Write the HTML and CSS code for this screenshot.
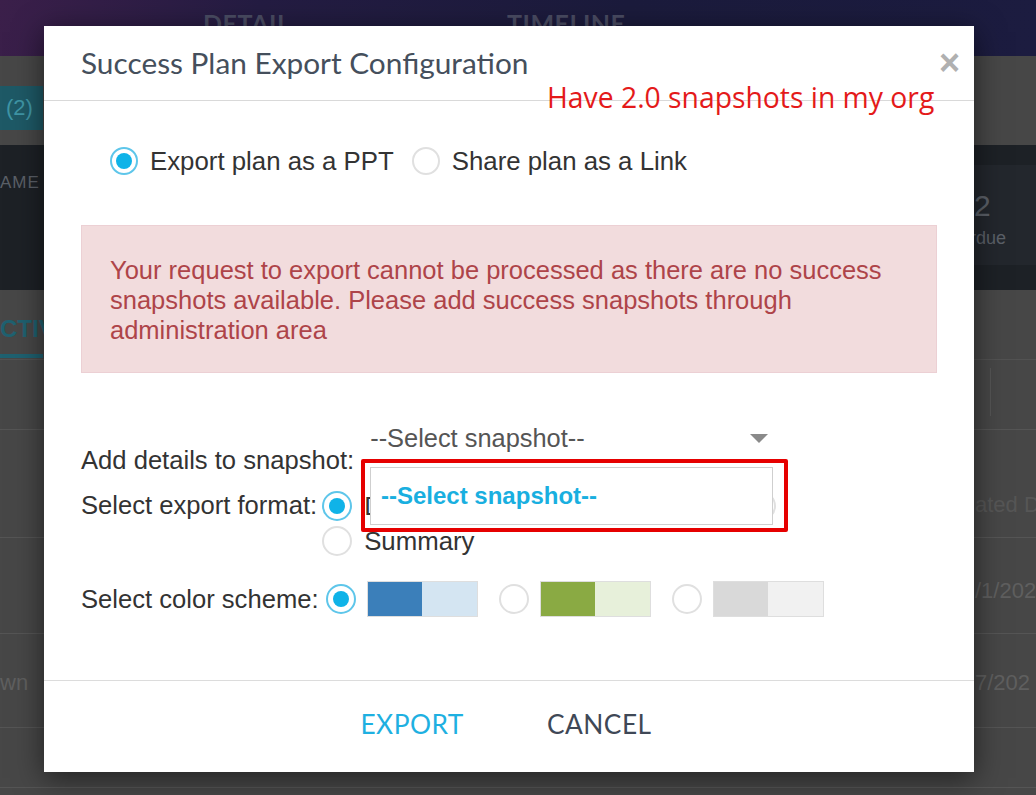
FILE: index.html
```html
<!DOCTYPE html>
<html>
<head>
<meta charset="utf-8">
<link rel="stylesheet" href="styles.css">
</head>
<body>
<div class="page">
  <div class="nav">
    <span class="navtab t1">DETAIL</span>
    <span class="navtab t2">TIMELINE</span>
  </div>
  <div class="subbar"><span class="tealtab">(2)</span></div>
  <div class="band">
    <span class="band-left">AME</span>
    <div class="band-box"><span class="big">2</span><span class="small">rdue</span></div>
  </div>
  <div class="tabs2"><span class="activ">CTIV</span></div>
  <div class="bgrow r1"><span class="vsep"></span></div>
  <div class="bgrow r2"><span class="rtext">ated D</span></div>
  <div class="bgrow r3"><span class="rtext">/1/202</span></div>
  <div class="bgrow r4"><span class="ltext">wn</span><span class="rtext">7/202</span></div>
  <div class="bgrow r5"></div>

  <div class="modal">
    <div class="modal-header">
      <span class="title">Success Plan Export Configuration</span>
      <span class="close">×</span>
    </div>
    <div class="modal-body">
      <div class="mode-row">
        <span class="radio checked"></span><span class="opt">Export plan as a PPT</span>
        <span class="radio"></span><span class="opt">Share plan as a Link</span>
      </div>
      <div class="alert">Your request to export cannot be processed as there are no success snapshots available. Please add success snapshots through administration area</div>
      <div class="form">
        <div class="frow snap-row">
          <span class="flabel snap-label">Add details to snapshot:</span>
          <div class="select">
            <span class="select-text">--Select snapshot--</span>
            <span class="caret"></span>
          </div>
        </div>
        <div class="frow fmt-row">
          <span class="flabel">Select export format:</span>
          <div class="fmt-opts">
            <div class="fmt-line">
              <span class="radio checked sm"></span><span class="opt fmt-text">Detailed</span>
              <span class="radio sm"></span>
            </div>
            <div class="fmt-line">
              <span class="radio sm"></span><span class="opt">Summary</span>
            </div>
          </div>
        </div>
        <div class="frow color-row">
          <span class="flabel">Select color scheme:</span>
          <span class="radio checked sm"></span>
          <span class="swatch"><i class="blue-d"></i><i class="blue-l"></i></span>
          <span class="radio sm"></span>
          <span class="swatch"><i class="green-d"></i><i class="green-l"></i></span>
          <span class="radio sm"></span>
          <span class="swatch"><i class="grey-d"></i><i class="grey-l"></i></span>
        </div>
      </div>
    </div>
    <div class="modal-footer">
      <span class="btn export">EXPORT</span>
      <span class="btn cancel">CANCEL</span>
    </div>

    <div class="dropdown-list"><span>--Select snapshot--</span></div>
    <div class="redbox"></div>
    <div class="note">Have 2.0 snapshots in my org</div>
  </div>
</div>
</body>
</html>
```

FILE: styles.css
```css
* { box-sizing: border-box; }
html, body { margin: 0; padding: 0; }
body { width: 1036px; height: 795px; overflow: hidden; font-family: "Liberation Sans", Arial, sans-serif; }

.page { position: relative; width: 1036px; height: 795px; background: #474747; overflow: hidden; }

.nav { height: 56px; background: linear-gradient(100deg, #3b1f4a 0%, #241c42 25%, #1b1b3c 60%, #1c1c40 100%); position: relative; }
.navtab { position: absolute; top: 8px; font-family: Lato, "Liberation Sans", sans-serif; font-weight: 700; font-size: 25px; color: #4a4c63; letter-spacing: 0.5px; }
.t1 { left: 203px; }
.t2 { left: 507px; }

.subbar { height: 89px; padding-top: 30px; }
.tealtab { display: inline-block; width: 43px; height: 44px; background: #1e5966; color: #3f95a5; font-size: 22px; line-height: 44px; padding-left: 6px; }

.band { height: 145px; background: #1d2126; position: relative; }
.band-left { position: absolute; left: 0; top: 28px; color: #5b6068; font-size: 17px; letter-spacing: 1px; }
.band-box { position: absolute; left: 940px; top: 20px; width: 96px; height: 100px; background: #23272d; }
.band-box .big { position: absolute; left: 34px; top: 24px; font-size: 30px; color: #5b6068; }
.band-box .small { position: absolute; left: 30px; top: 63px; font-size: 18px; color: #5b6068; }

.tabs2 { height: 70px; position: relative; border-bottom: 1px solid #525252; }
.activ { position: absolute; left: 0; top: 25px; font-size: 24px; font-weight: 700; color: #1f6170; }
.activ::after { content: ""; position: absolute; left: 0; top: 39px; width: 43px; height: 4px; background: #1f6170; }

.bgrow { position: relative; border-bottom: 1px solid #555; }
.r1 { height: 70px; }
.r2 { height: 108px; }
.r3 { height: 96px; }
.r4 { height: 94px; }
.r5 { height: 60px; }
.vsep { position: absolute; left: 990px; top: 8px; width: 1px; height: 48px; background: #555; }
.rtext { position: absolute; left: 975px; top: 38px; font-size: 22px; color: #5f5f5f; white-space: nowrap; }
.r2 .rtext { top: 62px; color: #565656; }
.r3 .rtext { top: 40px; color: #5f5f5f; }
.r4 .rtext { top: 36px; }
.ltext { position: absolute; left: 0; top: 36px; font-size: 22px; color: #5f5f5f; }

.modal { position: absolute; left: 44px; top: 26px; width: 930px; height: 746px; background: #fff; box-shadow: 0 6px 28px rgba(0,0,0,0.55); display: flex; flex-direction: column; }

.modal-header { height: 75px; border-bottom: 1px solid #d9d9d9; display: flex; align-items: center; justify-content: space-between; padding: 0 14px 0 37px; }
.title { font-family: Lato, "Liberation Sans", sans-serif; font-size: 29.8px; color: #454f5c; margin-top: -2px; }
.close { font-family: "Liberation Sans", sans-serif; font-size: 36px; font-weight: 700; color: #b0b0b0; line-height: 1; }

.modal-body { flex: 1; padding: 0 37px; display: flex; flex-direction: column; }

.mode-row { display: flex; align-items: center; height: 30px; margin-top: 45px; padding-left: 29px; }
.radio { width: 28px; height: 28px; border-radius: 50%; border: 2px solid #e0e0e0; flex: none; position: relative; background: #fff; }
.radio.checked { border-color: #5ec6ea; }
.radio.checked::after { content: ""; position: absolute; left: 4px; top: 4px; width: 16px; height: 16px; border-radius: 50%; background: #0fb3e8; }
.radio.sm { width: 30px; height: 30px; }
.radio.sm.checked::after { left: 5px; top: 5px; width: 16px; height: 16px; }
.opt { font-size: 25.8px; color: #333; margin-left: 12px; margin-right: 18px; }

.alert { margin-top: 49px; height: 148px; background: #f2dcdd; border: 1px solid #ecd0d4; color: #ae4449; font-size: 25.5px; line-height: 30px; padding: 29px 50px 0 28px; }

.form { margin-top: 50px; display: flex; flex-direction: column; }
.frow { display: flex; align-items: center; }
.flabel { font-size: 25.6px; color: #333; }
.snap-row { align-items: flex-start; height: 51px; }
.snap-label { margin-top: 22px; line-height: 30px; }
.select { margin-left: 16px; width: 400px; height: 30px; display: flex; align-items: center; justify-content: space-between; padding-right: 2px; }
.select-text { font-size: 25.4px; color: #555; }
.caret { width: 0; height: 0; border-left: 9px solid transparent; border-right: 9px solid transparent; border-top: 9px solid #8a8a8a; }

.fmt-row { align-items: flex-start; margin-top: 17px; }
.fmt-opts { margin-left: 5px; width: 454px; display: flex; flex-direction: column; gap: 5px; }
.fmt-line { display: flex; align-items: center; height: 30px; }
.fmt-line .opt { margin-left: 12px; }
.fmt-text { flex: 1; }

.color-row { margin-top: 25px; height: 36px; }
.color-row .radio { margin-left: 7px; }
.color-row .radio ~ .radio { margin-left: 0; }
.swatch { display: flex; width: 111px; height: 36px; border: 1px solid #dedede; margin-left: 11px; margin-right: 21px; }
.swatch i { flex: 1; display: block; }
.blue-d { background: #3b7fba; }
.blue-l { background: #d4e5f2; }
.green-d { background: #8aaa43; }
.green-l { background: #e7f0da; }
.grey-d { background: #d9d9d9; }
.grey-l { background: #f1f1f1; }

.modal-footer { height: 92px; border-top: 1px solid #dcdcdc; display: flex; align-items: center; justify-content: center; gap: 83px; padding-bottom: 6px; padding-right: 6px; }
.btn { font-family: Lato, "Liberation Sans", sans-serif; font-size: 26.3px; letter-spacing: 0.5px; }
.export { color: #1eb0e1; }
.cancel { color: #3f4856; }

.dropdown-list { position: absolute; left: 326px; top: 441px; width: 403px; height: 58px; background: #fff; border: 1px solid #cfcfcf; display: flex; align-items: center; padding-left: 10px; }
.dropdown-list span { font-size: 24px; font-weight: 700; color: #19afe0; }
.redbox { position: absolute; left: 317px; top: 433px; width: 427px; height: 73px; border: 4px solid #e60000; border-radius: 2px; }
.note { position: absolute; left: 503px; top: 54px; font-family: "Open Sans", sans-serif; font-size: 28.3px; color: #e41a1a; line-height: 34px; }
```
